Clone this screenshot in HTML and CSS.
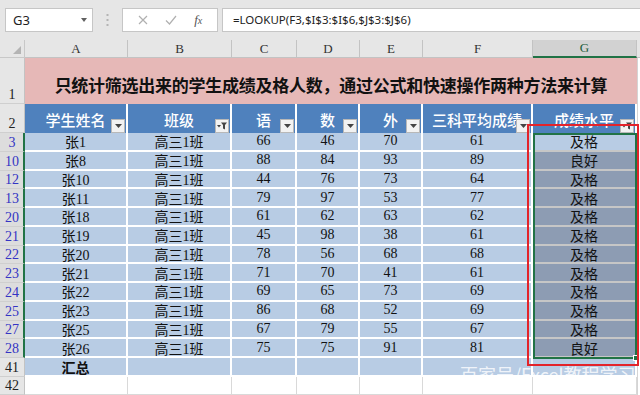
FILE: index.html
```html
<!DOCTYPE html>
<html lang="zh-CN">
<head>
    <meta charset="UTF-8">
    <meta name="viewport" content="width=device-width, initial-scale=1.0">
    <title>学生成绩统计</title>
    <link rel="stylesheet" href="styles.css">
</head>
<body>

    <!-- Barra de fórmulas -->
    <div class="formula-bar">
        <div class="name-box">G3<span class="name-arrow"></span></div>
        <div class="bar-dots">
            <svg width="3" height="12" viewBox="0 0 3 12"><rect x="0.5" y="0" width="2" height="2" fill="#b4b4b4"/><rect x="0.5" y="5" width="2" height="2" fill="#b4b4b4"/><rect x="0.5" y="10" width="2" height="2" fill="#b4b4b4"/></svg>
        </div>
        <div class="fx-box">
            <svg width="10" height="10" viewBox="0 0 10 10"><path d="M1 1L9 9M9 1L1 9" stroke="#b0b0b0" stroke-width="1.2" fill="none"/></svg>
            <svg width="12" height="10" viewBox="0 0 12 10"><path d="M1 5.5L4.5 9L11 1" stroke="#b0b0b0" stroke-width="1.2" fill="none"/></svg>
            <span class="fx-label">f<span class="fx-x">x</span></span>
        </div>
        <div class="formula-input">=LOOKUP(F3,$I$3:$I$6,$J$3:$J$6)</div>
    </div>

    <!-- Hoja de cálculo -->
    <div class="sheet">
        <div class="corner"></div>
        <div class="ch">A</div><div class="ch">B</div><div class="ch">C</div><div class="ch">D</div>
        <div class="ch">E</div><div class="ch">F</div><div class="ch active">G</div><div class="ch edge-head"></div>

        <div class="rh">1</div>
        <div class="title">只统计筛选出来的学生成绩及格人数，通过公式和快速操作两种方法来计算</div>
        <div class="edge"></div>

        <div class="rh">2</div>
        <div class="th">学生姓名<span class="filter"><svg width="7" height="4" viewBox="0 0 7 4"><path d="M0 0H7L3.5 4Z" fill="#444"/></svg></span></div>
        <div class="th">班级<span class="filter"><svg width="10" height="8" viewBox="0 0 10 8"><path d="M0 3H4L2 5.5Z" fill="#444"/><path d="M4 0.5H10L8 3V7.5L6 6.5V3Z" fill="#444"/></svg></span></div>
        <div class="th">语<span class="filter"><svg width="7" height="4" viewBox="0 0 7 4"><path d="M0 0H7L3.5 4Z" fill="#444"/></svg></span></div>
        <div class="th">数<span class="filter"><svg width="7" height="4" viewBox="0 0 7 4"><path d="M0 0H7L3.5 4Z" fill="#444"/></svg></span></div>
        <div class="th">外<span class="filter"><svg width="7" height="4" viewBox="0 0 7 4"><path d="M0 0H7L3.5 4Z" fill="#444"/></svg></span></div>
        <div class="th">三科平均成绩<span class="filter"><svg width="7" height="4" viewBox="0 0 7 4"><path d="M0 0H7L3.5 4Z" fill="#444"/></svg></span></div>
        <div class="th">成绩水平<span class="filter"><svg width="10" height="8" viewBox="0 0 10 8"><path d="M0 3H4L2 5.5Z" fill="#444"/><path d="M4 0.5H10L8 3V7.5L6 6.5V3Z" fill="#444"/></svg></span></div>
        <div class="edge"></div>

        <div class="rh sel">3</div><div class="td">张1</div><div class="td">高三1班</div><div class="td">66</div><div class="td">46</div><div class="td">70</div><div class="td">61</div><div class="td g active">及格</div><div class="edge"></div>
        <div class="rh sel">10</div><div class="td">张8</div><div class="td">高三1班</div><div class="td">88</div><div class="td">84</div><div class="td">93</div><div class="td">89</div><div class="td g">良好</div><div class="edge"></div>
        <div class="rh sel">12</div><div class="td">张10</div><div class="td">高三1班</div><div class="td">44</div><div class="td">76</div><div class="td">73</div><div class="td">64</div><div class="td g">及格</div><div class="edge"></div>
        <div class="rh sel">13</div><div class="td">张11</div><div class="td">高三1班</div><div class="td">79</div><div class="td">97</div><div class="td">53</div><div class="td">77</div><div class="td g">及格</div><div class="edge"></div>
        <div class="rh sel">20</div><div class="td">张18</div><div class="td">高三1班</div><div class="td">61</div><div class="td">62</div><div class="td">63</div><div class="td">62</div><div class="td g">及格</div><div class="edge"></div>
        <div class="rh sel">21</div><div class="td">张19</div><div class="td">高三1班</div><div class="td">45</div><div class="td">98</div><div class="td">38</div><div class="td">61</div><div class="td g">及格</div><div class="edge"></div>
        <div class="rh sel">22</div><div class="td">张20</div><div class="td">高三1班</div><div class="td">78</div><div class="td">56</div><div class="td">68</div><div class="td">68</div><div class="td g">及格</div><div class="edge"></div>
        <div class="rh sel">23</div><div class="td">张21</div><div class="td">高三1班</div><div class="td">71</div><div class="td">70</div><div class="td">41</div><div class="td">61</div><div class="td g">及格</div><div class="edge"></div>
        <div class="rh sel">24</div><div class="td">张22</div><div class="td">高三1班</div><div class="td">69</div><div class="td">65</div><div class="td">73</div><div class="td">69</div><div class="td g">及格</div><div class="edge"></div>
        <div class="rh sel">25</div><div class="td">张23</div><div class="td">高三1班</div><div class="td">86</div><div class="td">68</div><div class="td">52</div><div class="td">69</div><div class="td g">及格</div><div class="edge"></div>
        <div class="rh sel">27</div><div class="td">张25</div><div class="td">高三1班</div><div class="td">67</div><div class="td">79</div><div class="td">55</div><div class="td">67</div><div class="td g">及格</div><div class="edge"></div>
        <div class="rh sel">28</div><div class="td">张26</div><div class="td">高三1班</div><div class="td">75</div><div class="td">75</div><div class="td">91</div><div class="td">81</div><div class="td g">良好</div><div class="edge"></div>

        <div class="rh">41</div><div class="td total">汇总</div><div class="td"></div><div class="td"></div><div class="td"></div><div class="td"></div><div class="td"></div><div class="td"></div><div class="edge"></div>

        <div class="rh">42</div><div class="blank"></div><div class="blank"></div><div class="blank"></div><div class="blank"></div><div class="blank"></div><div class="blank"></div><div class="blank"></div><div class="edge"></div>

        <!-- Selección y marcas encima de la hoja -->
        <div class="selection"><span class="fill-handle"></span></div>
        <div class="red-box"></div>
        <div class="watermark"><span>百家号/Excel教程学习</span></div>
    </div>

</body>
</html>
```

FILE: styles.css
```css
* {
    box-sizing: border-box;
}
body {
    margin: 0;
    width: 640px;
    height: 395px;
    overflow: hidden;
    background-color: #ffffff;
    font-family: "Liberation Serif", "Noto Sans CJK SC", serif;
    color: #111111;
}

/* Barra de fórmulas */
.formula-bar {
    height: 40px;
    background-color: #e6e6e6;
    display: flex;
    align-items: flex-start;
    padding: 8px 0 0 5px;
}
.name-box {
    width: 88px;
    height: 24px;
    background-color: #ffffff;
    border: 1px solid #c6c6c6;
    display: flex;
    align-items: center;
    justify-content: space-between;
    padding: 0 5px 0 7px;
    font: 13px "Noto Sans", sans-serif;
    color: #222222;
}
.name-arrow {
    border-left: 3px solid transparent;
    border-right: 3px solid transparent;
    border-top: 4px solid #606060;
}
.bar-dots {
    width: 29px;
    height: 24px;
    display: flex;
    align-items: center;
    justify-content: center;
}
.fx-box {
    width: 96px;
    height: 24px;
    background-color: #ffffff;
    border: 1px solid #c6c6c6;
    display: flex;
    align-items: center;
    justify-content: space-around;
    padding: 0 6px;
}
.fx-label {
    font: italic 13px "Liberation Serif", serif;
    color: #555555;
}
.fx-x {
    font-size: 10px;
}
.formula-input {
    flex: 1;
    height: 24px;
    margin-left: 4px;
    background-color: #ffffff;
    border: 1px solid #c6c6c6;
    border-right: none;
    padding-left: 10px;
    font: 11.5px "Noto Sans", sans-serif;
    line-height: 22px;
    color: #222222;
}

/* Hoja */
.sheet {
    position: relative;
    display: grid;
    grid-template-columns: 25px 103px 104px 65px 63px 63px 110px 104px 3px;
    grid-template-rows: 18px 46px 29px repeat(12, 18.75px) 19px 18px;
}
.corner {
    position: relative;
    background-color: #e6e6e6;
    border-right: 1px solid #c8c8c8;
    border-bottom: 1px solid #c8c8c8;
}
.corner::after {
    content: "";
    position: absolute;
    right: 3px;
    bottom: 3px;
    border-left: 8px solid transparent;
    border-bottom: 8px solid #b4b4b4;
}
.ch {
    background-color: #e6e6e6;
    border-right: 1px solid #c3c3c3;
    border-bottom: 1px solid #c3c3c3;
    display: flex;
    align-items: center;
    justify-content: center;
    font-size: 13px;
    color: #333333;
}
.ch.active {
    background-color: #d2d2d2;
    border-bottom: 2px solid #217346;
    color: #1f5d3a;
}
.ch.edge-head {
    border-right: none;
}
.rh {
    background-color: #e6e6e6;
    border-right: 1px solid #c3c3c3;
    border-bottom: 1px solid #cfcfcf;
    display: flex;
    align-items: flex-end;
    justify-content: center;
    font-size: 14px;
    line-height: 17px;
    color: #222222;
}
.rh.sel {
    background-color: #dddddd;
    border-right: 2px solid #217346;
    color: #3434c4;
    padding-left: 1px;
}
.title {
    grid-column: span 7;
    background-color: #e6b8b7;
    display: flex;
    align-items: center;
    justify-content: center;
    padding-top: 7px;
    font: bold 17px "Noto Sans CJK SC", sans-serif;
    letter-spacing: -0.25px;
    color: #111111;
}
.th {
    position: relative;
    background-color: #4f81bd;
    border-right: 2px solid #ffffff;
    display: flex;
    align-items: flex-end;
    justify-content: center;
    padding-bottom: 3px;
    overflow: hidden;
    white-space: nowrap;
    font: 500 15px "Noto Sans CJK SC", sans-serif;
    color: #ffffff;
}
.filter {
    position: absolute;
    right: 1px;
    bottom: 0;
    width: 14px;
    height: 14px;
    background-color: #f2f2f2;
    border: 1px solid #b8b8b8;
    display: flex;
    align-items: center;
    justify-content: center;
}
.td {
    background-color: #b8cce4;
    border-right: 2px solid #ffffff;
    border-bottom: 2px solid #ffffff;
    display: flex;
    align-items: center;
    justify-content: center;
    font-size: 14px;
    white-space: nowrap;
}
.td.g {
    background-color: #8d9cb3;
    border-bottom-color: #c6c6c6;
    border-right-color: #c6c6c6;
}
.td.g.active {
    background-color: #b8cce4;
}
.td.total {
    font-weight: bold;
}
.blank {
    border-right: 1px solid #d9d9d9;
    border-bottom: 1px solid #d9d9d9;
}
.edge {
    border-left: 1px solid #d4d4d4;
}

/* Marcas encima */
.selection {
    position: absolute;
    left: 533px;
    top: 93px;
    width: 104px;
    height: 226px;
    border: 2px solid #217346;
}
.fill-handle {
    position: absolute;
    right: -4px;
    bottom: -4px;
    width: 6px;
    height: 6px;
    background-color: #217346;
    border: 1px solid #ffffff;
}
.red-box {
    position: absolute;
    left: 527px;
    top: 84px;
    width: 112px;
    height: 242px;
    border: 2px solid #e3232a;
}
.watermark {
    position: absolute;
    left: 460px;
    top: 318px;
    width: 180px;
    height: 19px;
    overflow: hidden;
}
.watermark span {
    display: block;
    margin-top: 6px;
    font: 18px "Noto Sans CJK SC", sans-serif;
    line-height: 20px;
    white-space: nowrap;
    color: rgba(255, 255, 255, 0.8);
}
```
